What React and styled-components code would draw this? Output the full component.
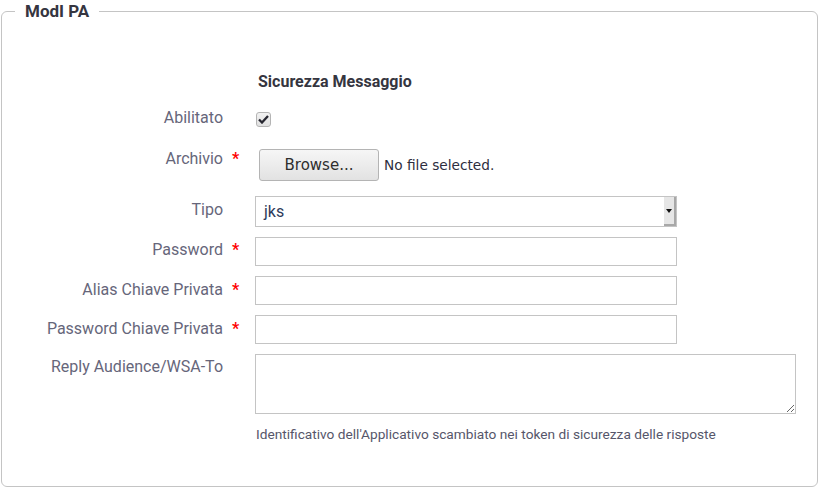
import React from "react";
import styled, { createGlobalStyle } from "styled-components";

const GlobalStyle = createGlobalStyle`
  html, body { margin: 0; padding: 0; background: #fff; }
  body { font-family: Roboto, "Noto Sans", sans-serif; }
`;

function App() {
  return (
    <>
      <GlobalStyle />
      <Page>
        <Fieldset>
          <Legend>ModI PA</Legend>

          <Heading>Sicurezza Messaggio</Heading>

          <Row $top={16}>
            <Label $pt={0}>Abilitato</Label>
            <Req $pt={0} />
            <Field>
              <CheckBox>
                <svg width="11" height="9" viewBox="0 0 11 9">
                  <path d="M1 4.5 L4 7.5 L10 1" fill="none" stroke="#262630" strokeWidth="2.3" />
                </svg>
              </CheckBox>
            </Field>
          </Row>

          <Row $top={21}>
            <Label $pt={0}>Archivio</Label>
            <Req $pt={0}>*</Req>
            <Field>
              <FileWrap>
                <BrowseButton type="button">Browse...</BrowseButton>
                <FileName>No file selected.</FileName>
              </FileWrap>
            </Field>
          </Row>

          <Row $top={15}>
            <Label $pt={4}>Tipo</Label>
            <Req />
            <Field>
              <SelectBox>
                <span>jks</span>
                <SelectArrow>
                  <svg width="6" height="4" viewBox="0 0 6 4">
                    <path d="M0 0 H6 L3 4 Z" fill="#111" />
                  </svg>
                </SelectArrow>
              </SelectBox>
            </Field>
          </Row>

          <Row $top={10}>
            <Label $pt={3}>Password</Label>
            <Req $pt={3}>*</Req>
            <Field>
              <TextInput type="password" />
            </Field>
          </Row>

          <Row $top={10}>
            <Label $pt={4}>Alias Chiave Privata</Label>
            <Req $pt={4}>*</Req>
            <Field>
              <TextInput type="text" />
            </Field>
          </Row>

          <Row $top={10}>
            <Label $pt={4}>Password Chiave Privata</Label>
            <Req $pt={4}>*</Req>
            <Field>
              <TextInput type="password" />
            </Field>
          </Row>

          <Row $top={10}>
            <Label $pt={3}>Reply Audience/WSA-To</Label>
            <Req />
            <Field>
              <TextArea />
              <Help>
                Identificativo dell'Applicativo scambiato nei token di sicurezza delle risposte
              </Help>
            </Field>
          </Row>
        </Fieldset>
      </Page>
    </>
  );
}

const Page = styled.div`
  width: 819px;
  height: 487px;
  padding: 1px 1px 0 1px;
  box-sizing: border-box;
`;

const Fieldset = styled.fieldset`
  margin: 0;
  padding: 0 0 40px 0;
  width: 817px;
  height: 486px;
  box-sizing: border-box;
  border: 1px solid #c4c4c4;
  border-radius: 6px;
`;

const Legend = styled.legend`
  margin-left: 13px;
  padding: 0 10px;
  font-size: 17px;
  font-weight: 700;
  color: #353540;
  line-height: 20px;
`;

const Heading = styled.h3`
  margin: 51px 0 0 256px;
  font-size: 16px;
  font-weight: 700;
  color: #353540;
  line-height: 20px;
`;

const Row = styled.div`
  display: grid;
  grid-template-columns: 222px 31px 1fr;
  align-items: start;
  margin-top: ${(p) => p.$top}px;
`;

const Label = styled.label`
  text-align: right;
  font-size: 16px;
  line-height: 20px;
  color: #66667a;
  padding-right: 1px;
  padding-top: ${(p) => (p.$pt ?? 4)}px;
`;

const Req = styled.span`
  color: #ff0000;
  font-weight: 700;
  font-size: 16px;
  line-height: 20px;
  padding-left: 8px;
  padding-top: ${(p) => (p.$pt ?? 4)}px;
`;

const Field = styled.div`
  display: flex;
  flex-direction: column;
`;

const CheckBox = styled.span`
  margin: 4px 0 0 1px;
  width: 15px;
  height: 15px;
  box-sizing: border-box;
  border: 1px solid #b4b4b4;
  border-radius: 3px;
  background: linear-gradient(#f2f2f2, #e0e0e0);
  display: flex;
  align-items: center;
  justify-content: center;
`;

const FileWrap = styled.div`
  display: flex;
  align-items: center;
  gap: 5px;
  padding-left: 4px;
`;

const BrowseButton = styled.button`
  width: 120px;
  height: 32px;
  border: 1px solid #b4b4b4;
  border-radius: 3px;
  background: linear-gradient(#f6f6f6, #e2e2e2);
  font-family: "DejaVu Sans", sans-serif;
  font-size: 15px;
  color: #2e2e2e;
  padding: 0;
`;

const FileName = styled.span`
  font-family: "DejaVu Sans", sans-serif;
  font-size: 13.7px;
  color: #2e2e3e;
`;

const SelectBox = styled.div`
  position: relative;
  width: 422px;
  height: 31px;
  box-sizing: border-box;
  border: 1px solid #c4c4c4;
  display: flex;
  align-items: center;
  padding-left: 8px;
  font-size: 16px;
  color: #2e3a5a;
`;

const SelectArrow = styled.span`
  position: absolute;
  right: 0;
  top: 0;
  bottom: 0;
  width: 12px;
  background: #e6e6e6;
  border-right: 2px solid #a8a8a8;
  border-bottom: 2px solid #a8a8a8;
  box-sizing: border-box;
  display: flex;
  align-items: center;
  justify-content: center;
`;

const TextInput = styled.input`
  width: 422px;
  height: 29px;
  box-sizing: border-box;
  border: 1px solid #c4c4c4;
  margin: 0;
  padding: 0 8px;
  font-size: 15px;
  outline: none;
`;

const TextArea = styled.textarea`
  width: 541px;
  height: 60px;
  box-sizing: border-box;
  border: 1px solid #c4c4c4;
  margin: 0;
  padding: 4px 8px;
  display: block;
  font-size: 15px;
`;

const Help = styled.div`
  margin-top: 10px;
  padding-left: 1px;
  font-size: 13.7px;
  line-height: 20px;
  color: #56566a;
`;

export default App;
